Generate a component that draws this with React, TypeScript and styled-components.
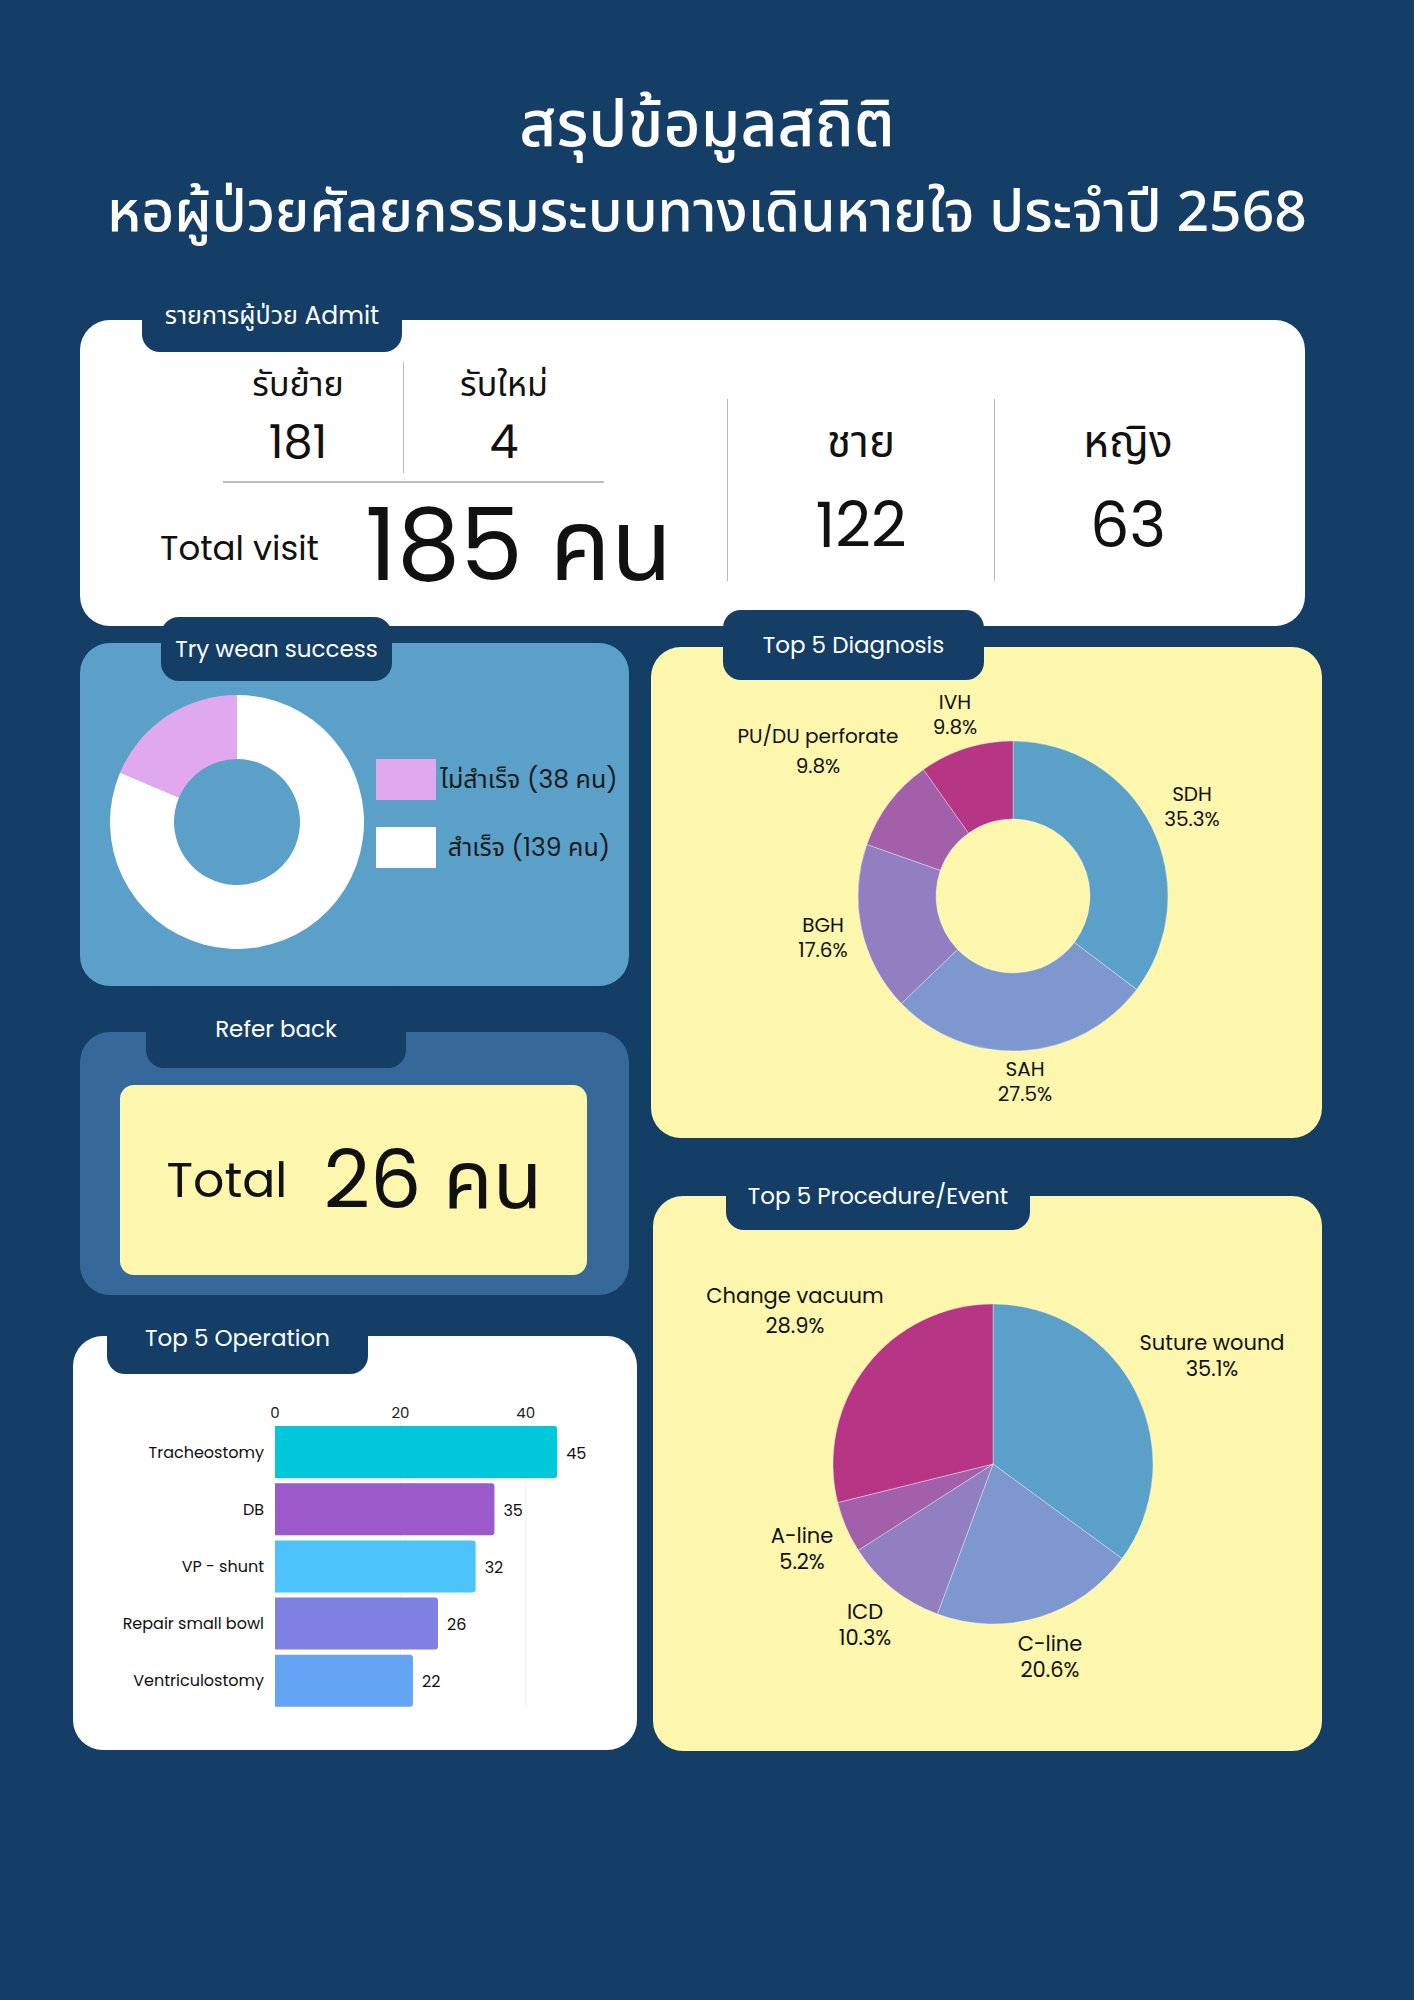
import React from 'react';
import styled, { createGlobalStyle } from 'styled-components';

const THAI = `"Noto Sans Thai", "Noto Sans Thai UI", "Noto Sans Thai Looped", "Loma", "Garuda", "Sarabun", "Kinnari", "Noto Sans", sans-serif`;
const FONT = `"Poppins", "Open Sans", ${THAI}`;

const NAVY = '#143e66';
const YELLOW = '#fdf6ad';

const GlobalStyle = createGlobalStyle`
  body {
    margin: 0;
    background: ${NAVY};
    font-family: ${FONT};
    color: #111;
  }
`;

type Slice = { label: string; pct: string; value: number; color: string; lx: number; ly: number; gap: number };

const polar = (cx: number, cy: number, r: number, deg: number) => {
  const a = (deg * Math.PI) / 180;
  return [cx + r * Math.sin(a), cy - r * Math.cos(a)];
};

// slice from a0 to a1 degrees, clockwise from 12 o'clock
const arcPath = (cx: number, cy: number, r: number, ri: number, a0: number, a1: number) => {
  const large = a1 - a0 > 180 ? 1 : 0;
  const [x0, y0] = polar(cx, cy, r, a0);
  const [x1, y1] = polar(cx, cy, r, a1);
  if (ri === 0) {
    return `M${cx},${cy} L${x0},${y0} A${r},${r} 0 ${large} 1 ${x1},${y1} Z`;
  }
  const [x2, y2] = polar(cx, cy, ri, a1);
  const [x3, y3] = polar(cx, cy, ri, a0);
  return `M${x0},${y0} A${r},${r} 0 ${large} 1 ${x1},${y1} L${x2},${y2} A${ri},${ri} 0 ${large} 0 ${x3},${y3} Z`;
};

const diagnosis: Slice[] = [
  { label: 'SDH', pct: '35.3%', value: 35.3, color: '#5aa0c8', lx: 541, ly: 147, gap: 25 },
  { label: 'SAH', pct: '27.5%', value: 27.5, color: '#7f97cf', lx: 374, ly: 422, gap: 25 },
  { label: 'BGH', pct: '17.6%', value: 17.6, color: '#917fc1', lx: 172, ly: 278, gap: 25 },
  { label: 'PU/DU perforate', pct: '9.8%', value: 9.8, color: '#a25faa', lx: 167, ly: 89, gap: 30 },
  { label: 'IVH', pct: '9.8%', value: 9.8, color: '#b73585', lx: 304, ly: 55, gap: 25 },
];

const procedures: Slice[] = [
  { label: 'Suture wound', pct: '35.1%', value: 35.1, color: '#5aa0c8', lx: 559, ly: 146, gap: 26 },
  { label: 'C-line', pct: '20.6%', value: 20.6, color: '#7f97cf', lx: 397, ly: 447, gap: 26 },
  { label: 'ICD', pct: '10.3%', value: 10.3, color: '#917fc1', lx: 212, ly: 415, gap: 26 },
  { label: 'A-line', pct: '5.2%', value: 5.2, color: '#a25faa', lx: 149, ly: 339, gap: 26 },
  { label: 'Change vacuum', pct: '28.9%', value: 28.9, color: '#b73585', lx: 142, ly: 99, gap: 30 },
];

const operations = [
  { name: 'Tracheostomy', value: 45, color: '#00c8da' },
  { name: 'DB', value: 35, color: '#9b59c9' },
  { name: 'VP - shunt', value: 32, color: '#4cc3fb' },
  { name: 'Repair small bowl', value: 26, color: '#7f80e1' },
  { name: 'Ventriculostomy', value: 22, color: '#63a4f4' },
];

const PieChart = ({
  data,
  cx,
  cy,
  r,
  ri,
  w,
  h,
  fontSize,
}: {
  data: Slice[];
  cx: number;
  cy: number;
  r: number;
  ri: number;
  w: number;
  h: number;
  fontSize: number;
}) => {
  const total = data.reduce((s, d) => s + d.value, 0);
  let acc = 0;
  return (
    <ChartSvg width={w} height={h} viewBox={`0 0 ${w} ${h}`}>
      {data.map((d) => {
        const a0 = (acc / total) * 360;
        acc += d.value;
        const a1 = (acc / total) * 360;
        return (
          <path
            key={d.label}
            d={arcPath(cx, cy, r, ri, a0, a1)}
            fill={d.color}
            stroke="rgba(255,255,255,0.35)"
            strokeWidth={1}
          />
        );
      })}
      {data.map((d) => (
        <text
          key={d.label + '-t'}
          fontSize={fontSize}
          fill="#111"
          textAnchor="middle"
          dominantBaseline="central"
        >
          <tspan x={d.lx} y={d.ly}>
            {d.label}
          </tspan>
          <tspan x={d.lx} y={d.ly + d.gap}>
            {d.pct}
          </tspan>
        </text>
      ))}
    </ChartSvg>
  );
};

const WeanDonut = () => {
  const cx = 127;
  const cy = 127;
  return (
    <svg width={254} height={254} viewBox="0 0 254 254">
      <path d={arcPath(cx, cy, 127, 63, 0, 293)} fill="#ffffff" />
      <path d={arcPath(cx, cy, 127, 63, 293, 360)} fill="#e0a8ef" />
    </svg>
  );
};

const BarChart = () => {
  const x0 = 202;
  const unit = 6.27;
  const pitch = 57.2;
  return (
    <ChartSvg width={564} height={330} viewBox="0 0 564 330">
      {[20, 40].map((t) => (
        <line key={t} x1={x0 + t * unit} x2={x0 + t * unit} y1={24} y2={311} stroke="#eef0f3" strokeWidth={1} />
      ))}
      {[0, 20, 40].map((t) => (
        <text key={'a' + t} x={x0 + t * unit} y={16} fontSize={15} textAnchor="middle" dominantBaseline="central" fill="#222">
          {t}
        </text>
      ))}
      {operations.map((o, i) => {
        const y = 30 + i * pitch;
        const w = o.value * unit;
        return (
          <g key={o.name}>
            <path
              d={`M${x0},${y} H${x0 + w - 3} Q${x0 + w},${y} ${x0 + w},${y + 3} V${y + 49} Q${x0 + w},${y + 52} ${x0 + w - 3},${y + 52} H${x0} Z`}
              fill={o.color}
            />
            <text x={191} y={y + 26} fontSize={16} textAnchor="end" dominantBaseline="central" fill="#111">
              {o.name}
            </text>
            <text x={x0 + w + 9} y={y + 27} fontSize={16} dominantBaseline="central" fill="#111">
              {o.value}
            </text>
          </g>
        );
      })}
    </ChartSvg>
  );
};

const App = () => {
  return (
    <>
      <GlobalStyle />
      <Page>
        <Header>
          <TitleMain>สรุปข้อมูลสถิติ</TitleMain>
          <TitleSub>หอผู้ป่วยศัลยกรรมระบบทางเดินหายใจ ประจำปี 2568</TitleSub>
        </Header>

        <AdmitCard>
          <Tab $left={62} $top={-40} $width={260} $height={72} $size={25}>
            รายการผู้ป่วย Admit
          </Tab>
          <AdmitLeft>
            <SplitRow>
              <SplitCol $width={150}>
                <SmallLabel>รับย้าย</SmallLabel>
                <SmallValue>181</SmallValue>
              </SplitCol>
              <VRule $marginLeft={30} $height={111} />
              <SplitCol $width={200}>
                <SmallLabel>รับใหม่</SmallLabel>
                <SmallValue>4</SmallValue>
              </SplitCol>
            </SplitRow>
            <HRule />
            <TotalRow>
              <TotalLabel>Total visit</TotalLabel>
              <TotalValue>185 คน</TotalValue>
            </TotalRow>
          </AdmitLeft>
          <GenderGroup>
            <VRule $marginLeft={0} $height={182} />
            <GenderCol>
              <GenderLabel>ชาย</GenderLabel>
              <GenderValue>122</GenderValue>
            </GenderCol>
            <VRule $marginLeft={0} $height={182} />
            <GenderCol>
              <GenderLabel>หญิง</GenderLabel>
              <GenderValue>63</GenderValue>
            </GenderCol>
          </GenderGroup>
        </AdmitCard>

        <Columns>
          <LeftColumn>
            <WeanCard>
              <Tab $left={81} $top={-26} $width={231} $height={64} $size={23}>
                Try wean success
              </Tab>
              <WeanDonut />
              <Legend>
                <LegendRow>
                  <Swatch $color="#e0a8ef" />
                  <LegendText>ไม่สำเร็จ (38 คน)</LegendText>
                </LegendRow>
                <LegendRow>
                  <Swatch $color="#ffffff" />
                  <LegendText>สำเร็จ (139 คน)</LegendText>
                </LegendRow>
              </Legend>
            </WeanCard>

            <ReferCard>
              <Tab $left={66} $top={-43} $width={260} $height={79} $size={23}>
                Refer back
              </Tab>
              <ReferBox>
                <ReferLabel>Total</ReferLabel>
                <ReferValue>26 คน</ReferValue>
              </ReferBox>
            </ReferCard>

            <OperationCard>
              <Tab $left={34} $top={-34} $width={261} $height={72} $size={23}>
                Top 5 Operation
              </Tab>
              <BarChart />
            </OperationCard>
          </LeftColumn>

          <RightColumn>
            <ChartCard $height={491} $marginLeft={0} $marginTop={0}>
              <Tab $left={72} $top={-37} $width={261} $height={70} $size={23}>
                Top 5 Diagnosis
              </Tab>
              <PieChart data={diagnosis} cx={362} cy={249} r={155} ri={77} w={671} h={491} fontSize={20} />
            </ChartCard>
            <ChartCard $height={555} $marginLeft={2} $marginTop={58}>
              <Tab $left={73} $top={-34} $width={304} $height={68} $size={23}>
                Top 5 Procedure/Event
              </Tab>
              <PieChart data={procedures} cx={340} cy={268} r={160} ri={0} w={669} h={555} fontSize={21} />
            </ChartCard>
          </RightColumn>
        </Columns>
      </Page>
    </>
  );
};

const Page = styled.div`
  width: 1414px;
  min-height: 2000px;
  background: ${NAVY};
  overflow: hidden;
`;

const Header = styled.header`
  padding-top: 86px;
  display: flex;
  flex-direction: column;
  align-items: center;
  gap: 10px;
  color: #fff;
  font-family: ${THAI};
`;

const TitleMain = styled.h1`
  margin: 0;
  font-size: 64px;
  font-weight: 500;
  line-height: 82px;
`;

const TitleSub = styled.h2`
  margin: 0;
  font-size: 57px;
  font-weight: 500;
  line-height: 72px;
`;

const Card = styled.section`
  position: relative;
  border-radius: 30px;
  box-sizing: border-box;
`;

const Tab = styled.div<{ $left: number; $top: number; $width: number; $height: number; $size: number }>`
  position: absolute;
  left: ${(p) => p.$left}px;
  top: ${(p) => p.$top}px;
  width: ${(p) => p.$width}px;
  height: ${(p) => p.$height}px;
  background: ${NAVY};
  border-radius: 18px;
  color: #fff;
  font-size: ${(p) => p.$size}px;
  display: flex;
  align-items: center;
  justify-content: center;
  white-space: nowrap;
`;

const AdmitCard = styled(Card)`
  margin: 70px 0 0 80px;
  width: 1225px;
  height: 306px;
  background: #fff;
  display: flex;
`;

const AdmitLeft = styled.div`
  width: 647px;
  padding-top: 42px;
  display: flex;
  flex-direction: column;
`;

const SplitRow = styled.div`
  display: flex;
  margin-left: 143px;
`;

const SplitCol = styled.div<{ $width: number }>`
  width: ${(p) => p.$width}px;
  display: flex;
  flex-direction: column;
  align-items: center;
`;

const SmallLabel = styled.div`
  font-size: 34px;
  line-height: 44px;
`;

const SmallValue = styled.div`
  font-size: 46px;
  line-height: 56px;
  margin-top: 8px;
`;

const VRule = styled.div<{ $marginLeft: number; $height: number }>`
  width: 1px;
  height: ${(p) => p.$height}px;
  margin-left: ${(p) => p.$marginLeft}px;
  background: #b8b8b8;
  flex-shrink: 0;
`;

const HRule = styled.div`
  margin: 8px 0 0 143px;
  width: 381px;
  height: 2px;
  background: #bdbdbd;
`;

const TotalRow = styled.div`
  display: flex;
  align-items: center;
  margin: 12px 0 0 80px;
  gap: 46px;
`;

const TotalLabel = styled.div`
  font-size: 34px;
  padding-top: 6px;
`;

const TotalValue = styled.div`
  font-size: 100px;
  line-height: 100px;
`;

const GenderGroup = styled.div`
  display: flex;
  align-items: flex-start;
  margin-top: 79px;
  height: 182px;
`;

const GenderCol = styled.div`
  width: 266px;
  display: flex;
  flex-direction: column;
  align-items: center;
`;

const GenderLabel = styled.div`
  font-size: 44px;
  line-height: 60px;
  margin-top: 13px;
`;

const GenderValue = styled.div`
  font-size: 62px;
  line-height: 80px;
  margin-top: 14px;
`;

const Columns = styled.div`
  display: flex;
  gap: 22px;
  margin-left: 80px;
`;

const LeftColumn = styled.div`
  width: 549px;
  padding-top: 17px;
  display: flex;
  flex-direction: column;
`;

const RightColumn = styled.div`
  width: 671px;
  padding-top: 21px;
  display: flex;
  flex-direction: column;
`;

const WeanCard = styled(Card)`
  height: 343px;
  background: #5aa0c8;
  display: flex;
  align-items: center;
  padding: 14px 0 0 30px;
  gap: 12px;
`;

const Legend = styled.div`
  display: flex;
  flex-direction: column;
  gap: 27px;
  margin-top: -16px;
`;

const LegendRow = styled.div`
  display: flex;
  align-items: center;
`;

const Swatch = styled.div<{ $color: string }>`
  width: 60px;
  height: 41px;
  background: ${(p) => p.$color};
`;

const LegendText = styled.div`
  width: 186px;
  text-align: center;
  font-size: 25px;
  color: #1a1a1a;
`;

const ReferCard = styled(Card)`
  margin-top: 46px;
  height: 263px;
  background: #36699a;
  padding: 53px 42px 0 40px;
`;

const ReferBox = styled.div`
  height: 190px;
  background: ${YELLOW};
  border-radius: 14px;
  display: flex;
  align-items: center;
  justify-content: center;
  gap: 36px;
  padding-left: 2px;
  box-sizing: border-box;
`;

const ReferLabel = styled.div`
  font-size: 49px;
  line-height: 70px;
`;

const ReferValue = styled.div`
  font-size: 81px;
  line-height: 110px;
`;

const OperationCard = styled(Card)`
  margin: 41px -8px 0 -7px;
  height: 414px;
  background: #fff;
  padding-top: 60px;
`;

const ChartCard = styled(Card)<{ $height: number; $marginLeft: number; $marginTop: number }>`
  height: ${(p) => p.$height}px;
  margin-left: ${(p) => p.$marginLeft}px;
  margin-top: ${(p) => p.$marginTop}px;
  background: ${YELLOW};
`;

const ChartSvg = styled.svg`
  display: block;
  font-family: ${FONT};
`;

export default App;
